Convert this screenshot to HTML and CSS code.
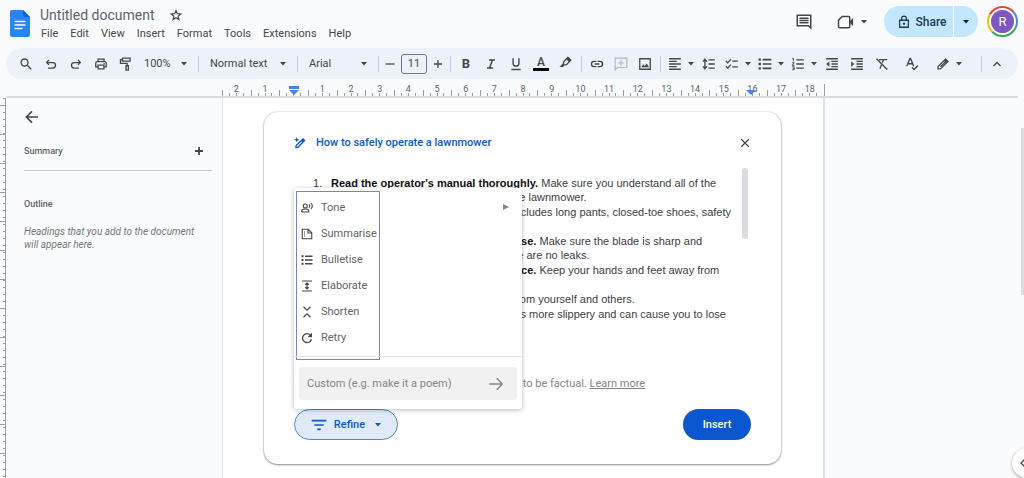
FILE: index.html
```html
<!DOCTYPE html>
<html lang="en-GB">
<head>
<meta charset="utf-8">
<title>Untitled document</title>
<link rel="stylesheet" href="styles.css">
</head>
<body>
<svg class="defs" aria-hidden="true">
  <symbol id="caret" viewBox="0 0 6 4"><path d="M0 0h6L3 3.5z" fill="currentColor"/></symbol>
  <symbol id="bullets" viewBox="0 0 24 24"><path fill="currentColor" d="M1 2.500h4v4H1zM1 10h4v4H1zM1 17.500h4v4H1zM8 3.200h15v2.600H8zM8 10.700h15v2.600H8zM8 18.200h15v2.600H8z"/></symbol>
</svg>

<header class="header">
  <svg class="logo" viewBox="0 0 20 27"><path fill="#2684fc" d="M2 0h11l7 7v18a2 2 0 0 1-2 2H2a2 2 0 0 1-2-2V2a2 2 0 0 1 2-2z"/><path fill="#0066da" d="M13 0l7 7h-5a2 2 0 0 1-2-2z"/><path stroke="#fff" stroke-width="1.400" d="M4.500 11.500h11M4.500 15h11M4.500 18.500h8"/></svg>
  <div class="headings">
    <div class="title-row">
      <h1 class="title">Untitled document</h1>
      <button class="bare" aria-label="Star"><svg class="i12" viewBox="0 0 24 24"><path fill="none" stroke="currentColor" stroke-width="2.400" d="M12 3l2.600 6.300 6.900.600-5.200 4.500 1.600 6.700-5.900-3.600-5.900 3.600 1.600-6.700-5.200-4.500 6.900-.6z"/></svg></button>
    </div>
    <nav class="menus">
      <button class="bare">File</button><button class="bare">Edit</button><button class="bare">View</button><button class="bare">Insert</button><button class="bare">Format</button><button class="bare">Tools</button><button class="bare">Extensions</button><button class="bare">Help</button>
    </nav>
  </div>
  <div class="actions">
    <button class="bare" aria-label="Comments"><svg class="i18" viewBox="0 0 24 24"><path fill="none" stroke="currentColor" stroke-width="2" d="M3 3h18v17l-3-3H3z"/><path stroke="currentColor" stroke-width="1.800" d="M6 7h12M6 10h12M6 13h12"/></svg></button>
    <button class="bare meet" aria-label="Join a call"><svg class="i18" viewBox="0 0 24 24"><path fill="none" stroke="currentColor" stroke-width="2" d="M7 4.500h8.500a1.500 1.500 0 0 1 1.500 1.500v12a1.500 1.500 0 0 1-1.500 1.500H3.500A1.500 1.500 0 0 1 2 18V9.500z"/><path fill="currentColor" d="M17 11L21.500 6.500v11L17 13z"/></svg><svg class="caret"><use href="#caret"/></svg></button>
    <div class="share">
      <button class="share-main"><svg class="i14" viewBox="0 0 24 24"><path fill="none" stroke="currentColor" stroke-width="2.200" d="M4.500 9h15v12h-15zM8 9V6a4 4 0 0 1 8 0v3"/><circle cx="12" cy="15" r="2" fill="currentColor"/></svg>Share</button>
      <button class="share-more" aria-label="Sharing options"><svg class="caret"><use href="#caret"/></svg></button>
    </div>
    <button class="avatar" aria-label="Account"><span class="initial">R</span></button>
  </div>
</header>

<div class="toolbar" role="toolbar">
  <div class="group">
    <button class="tool" aria-label="Search"><svg class="i14" viewBox="0 0 24 24"><path fill="none" stroke="currentColor" stroke-width="2.300" d="M14.500 14.500L21 21"/><circle cx="9.500" cy="9.500" r="6" fill="none" stroke="currentColor" stroke-width="2.300"/></svg></button>
    <button class="tool" aria-label="Undo"><svg class="i14" viewBox="0 0 24 24"><path fill="none" stroke="currentColor" stroke-width="2.200" d="M8.500 5L4.500 9.500l4 4M5 9.500h10a4.700 4.700 0 0 1 0 9.500H7"/></svg></button>
    <button class="tool" aria-label="Redo"><svg class="i14" viewBox="0 0 24 24"><path fill="none" stroke="currentColor" stroke-width="2.200" d="M15.500 5l4 4.500-4 4M19 9.500H9a4.700 4.700 0 0 0 0 9.500h8"/></svg></button>
    <button class="tool" aria-label="Print"><svg class="i14" viewBox="0 0 24 24"><path fill="none" stroke="currentColor" stroke-width="2.200" d="M7 8V3.500h10V8M7 17H3v-6.500A2.500 2.500 0 0 1 5.500 8h13a2.500 2.500 0 0 1 2.500 2.500V17h-4M7 14h10v6.500H7z"/><circle cx="17.500" cy="11.500" r="1.200" fill="currentColor"/></svg></button>
    <button class="tool" aria-label="Paint format"><svg class="i14" viewBox="0 0 24 24"><path fill="none" stroke="currentColor" stroke-width="2.200" d="M6 2h13v5H6zM6 4.500H2.500V11H14v4M12 15h4v7.500h-4z"/></svg></button>
  </div>
  <label class="pick zoom"><select aria-label="Zoom"><option>100%</option></select><svg class="caret"><use href="#caret"/></svg></label>
  <span class="sep"></span>
  <label class="pick style"><select aria-label="Styles"><option>Normal text</option></select><svg class="caret"><use href="#caret"/></svg></label>
  <span class="sep"></span>
  <label class="pick font"><select aria-label="Font"><option>Arial</option></select><svg class="caret"><use href="#caret"/></svg></label>
  <span class="sep"></span>
  <div class="size">
    <button class="bare" aria-label="Decrease font size"><svg class="i12" viewBox="0 0 24 24"><path stroke="currentColor" stroke-width="2.600" d="M3 12h18"/></svg></button>
    <input aria-label="Font size" value="11">
    <button class="bare" aria-label="Increase font size"><svg class="i12" viewBox="0 0 24 24"><path stroke="currentColor" stroke-width="2.600" d="M4 12h16M12 4v16"/></svg></button>
  </div>
  <span class="sep"></span>
  <div class="group">
    <button class="tool" aria-label="Bold"><b>B</b></button>
    <button class="tool" aria-label="Italic"><svg class="i12" viewBox="0 0 24 24"><path fill="none" stroke="currentColor" stroke-width="3" d="M8 4h12M4 20h12M15 4L9 20"/></svg></button>
    <button class="tool" aria-label="Underline"><svg class="i14" viewBox="0 0 24 24"><path fill="none" stroke="currentColor" stroke-width="2.400" d="M7 2v8.500a5 5 0 0 0 10 0V2M4 21.500h16"/></svg></button>
    <button class="tool" aria-label="Text colour"><span class="ink">A</span></button>
    <button class="tool" aria-label="Highlight colour"><svg class="i14 raised" viewBox="0 0 24 24"><path fill="none" stroke="currentColor" stroke-width="2.200" d="M8 11.500l7-7.500 5 5-7 7.500-4 .5-2.500 2.500H3.500l4-4z"/><path fill="currentColor" d="M12 7l4-4 5 5-4 4z"/></svg></button>
  </div>
  <span class="sep"></span>
  <div class="group tight">
    <button class="tool" aria-label="Insert link"><svg class="i14" viewBox="0 0 24 24"><path fill="none" stroke="currentColor" stroke-width="2.400" d="M11 7.500H7a4.500 4.500 0 0 0 0 9h4M13 7.500h4a4.500 4.500 0 0 1 0 9h-4M8 12h8"/></svg></button>
    <button class="tool" aria-label="Add comment" disabled><svg class="i14" viewBox="0 0 24 24"><path fill="none" stroke="currentColor" stroke-width="2" d="M2 2h20v16H6l-4 4zM12 5.500v9M7.500 10h9"/></svg></button>
    <button class="tool" aria-label="Insert image"><svg class="i14" viewBox="0 0 24 24"><path fill="none" stroke="currentColor" stroke-width="2.200" d="M3 3h18v18H3z"/><path fill="currentColor" d="M5.500 17.500l3.500-5 2.500 3 3.500-4.500 4 6.500z"/></svg></button>
  </div>
  <span class="sep"></span>
  <button class="tool pair" aria-label="Align"><svg class="i14" viewBox="0 0 24 24"><path stroke="currentColor" stroke-width="2.200" d="M2 3h20M2 7.500h13M2 12h20M2 16.500h13M2 21h20"/></svg><svg class="caret"><use href="#caret"/></svg></button>
  <button class="tool" aria-label="Line spacing"><svg class="i14" viewBox="0 0 24 24"><path fill="none" stroke="currentColor" stroke-width="2.300" d="M11 5h11M11 12h11M11 19h11M5 4v16M1.500 8L5 4l3.500 4M1.500 16L5 20l3.500-4"/></svg></button>
  <button class="tool pair" aria-label="Checklist"><svg class="i14" viewBox="0 0 24 24"><path fill="none" stroke="currentColor" stroke-width="2.300" d="M1.500 7l3 3L10 4M1.500 16l3 3L10 13M12.500 7H22M12.500 17H22"/></svg><svg class="caret"><use href="#caret"/></svg></button>
  <button class="tool pair" aria-label="Bulleted list"><svg class="i14" viewBox="0 0 24 24"><use href="#bullets"/></svg><svg class="caret"><use href="#caret"/></svg></button>
  <button class="tool pair" aria-label="Numbered list"><svg class="i14" viewBox="0 0 24 24"><path fill="none" stroke="currentColor" stroke-width="2.200" d="M9 5h13M9 12h13M9 19h13"/><path fill="none" stroke="currentColor" stroke-width="1.600" d="M2 2.500h2v5M2 9.800h3.500l-3.500 4.500h4M2 16.800h3.500v5H2M3 19.300h2.500"/></svg><svg class="caret"><use href="#caret"/></svg></button>
  <div class="group">
    <button class="tool" aria-label="Decrease indent"><svg class="i14" viewBox="0 0 24 24"><path fill="none" stroke="currentColor" stroke-width="2.200" d="M2 3h20M11 7.500h11M11 12h11M11 16.500h11M2 21h20"/><path fill="currentColor" d="M7.500 7.500v9L2 12z"/></svg></button>
    <button class="tool" aria-label="Increase indent"><svg class="i14" viewBox="0 0 24 24"><path fill="none" stroke="currentColor" stroke-width="2.200" d="M2 3h20M11 7.500h11M11 12h11M11 16.500h11M2 21h20"/><path fill="currentColor" d="M2 7.500v9L7.500 12z"/></svg></button>
    <button class="tool" aria-label="Clear formatting"><svg class="i14" viewBox="0 0 24 24"><path fill="none" stroke="currentColor" stroke-width="2.300" d="M2.500 3L21 21.500M7 4.500h14M14.500 5l-2 5M11 13.500L8.500 20"/></svg></button>
  </div>
  <button class="tool spell" aria-label="Spelling and grammar check"><svg class="i14" viewBox="0 0 24 24"><path fill="none" stroke="currentColor" stroke-width="2.300" d="M3 16L8.500 2.500h1L15 16M5 11.500h8M12 18l3.500 3.500L22 14.500"/></svg></button>
  <button class="tool pair mode" aria-label="Editing mode"><svg class="i14" viewBox="0 0 24 24"><path fill="none" stroke="currentColor" stroke-width="2.200" d="M3.500 20.500v-4L16.500 3.500l4 4L7.500 20.500z"/><path fill="currentColor" d="M7 16l9-9 1.500 1.500-9 9zM13.500 6.500l3-3 4 4-3 3z"/></svg><svg class="caret"><use href="#caret"/></svg></button>
  <span class="sep last"></span>
  <button class="tool" aria-label="Hide the menus"><svg class="i12" viewBox="0 0 24 24"><path fill="none" stroke="currentColor" stroke-width="2.600" d="M5 16l7-7 7 7"/></svg></button>
</div>

<div class="ruler">
  <div class="scale">
    <span>2</span><span>1</span><span></span><span>1</span><span>2</span><span>3</span><span>4</span><span>5</span><span>6</span><span>7</span><span>8</span><span>9</span><span>10</span><span>11</span><span>12</span><span>13</span><span>14</span><span>15</span><span>16</span><span>17</span><span>18</span>
    <svg class="marker start" viewBox="0 0 10 9"><path fill="#4285f4" d="M0 0h10v3H0zM0 4h10L5 9z"/></svg>
    <svg class="marker end" viewBox="0 0 10 9"><path fill="#4285f4" d="M0 4h10L5 9z"/></svg>
  </div>
</div>

<main class="workspace">
  <div class="v-ruler"></div>
  <aside class="outline">
    <button class="bare back" aria-label="Close outline"><svg class="i18" viewBox="0 0 24 24"><path fill="none" stroke="currentColor" stroke-width="2.200" d="M20 12H5M12 4.500L4.500 12l7.500 7.500"/></svg></button>
    <div class="summary"><h2>Summary</h2><button class="bare" aria-label="Add summary"><svg class="i12" viewBox="0 0 24 24"><path stroke="currentColor" stroke-width="3.600" d="M4 12h16M12 4v16"/></svg></button></div>
    <h2>Outline</h2>
    <p>Headings that you add to the document will appear here.</p>
  </aside>
  <div class="page">
    <section class="card">
      <div class="card-head">
        <svg class="i12 wand" viewBox="0 0 24 24"><path fill="none" stroke="currentColor" stroke-width="2.600" d="M4 21v-3.500L18 4l3 3L7.500 21z"/><path fill="currentColor" d="M5.500 0l1.500 4 4 1.500-4 1.500-1.500 4L4 7 0 5.500 4 4zM14 8l4-5 4 4-5 4z"/></svg>
        <h3>How to safely operate a lawnmower</h3>
        <button class="bare close" aria-label="Close"><svg class="i12" viewBox="0 0 24 24"><path stroke="currentColor" stroke-width="2.400" d="M4.500 4.500l15 15M19.500 4.500l-15 15"/></svg></button>
      </div>
      <div class="answer">
        <ol>
          <li><b>Read the operator's manual thoroughly.</b> Make sure you understand all of the<br>controls and basic safety features of the lawnmower.</li>
          <li><b>Wear all appropriate clothing.</b> This includes long pants, closed-toe shoes, safety<br>glasses and gloves.</li>
          <li><b>Check the lawnmower before each use.</b> Make sure the blade is sharp and<br>balanced properly, and check that there are no leaks.</li>
          <li><b>Start the lawnmower at a safe distance.</b> Keep your hands and feet away from<br>the blade.</li>
          <li><b>Point the discharge chute</b> far away from yourself and others.</li>
          <li><b>Avoid mowing wet grass.</b> Wet grass is more slippery and can cause you to lose</li>
        </ol>
        <span class="thumb"></span>
      </div>
      <p class="note">This is a creative writing aid, and isn't intended to be factual. <a href="#">Learn more</a></p>
      <div class="card-foot">
        <div class="refine-wrap">
          <button class="refine"><svg class="i16" viewBox="0 0 24 24"><path stroke="currentColor" stroke-width="2.400" d="M1 5.500h22M5 12h14M9.500 18.500h5"/></svg>Refine<svg class="caret"><use href="#caret"/></svg></button>
          <div class="menu">
            <div class="options">
              <button class="option"><svg class="i12" viewBox="0 0 24 24"><circle cx="8.500" cy="8" r="4" fill="none" stroke="currentColor" stroke-width="2.200"/><path fill="none" stroke="currentColor" stroke-width="2.200" d="M1.500 20v-2.500c0-2 4-3.500 7-3.500s7 1.500 7 3.500V20zM16 4.500c1.500 2 1.500 5 0 7M20 2c3 3.500 3 8.500 0 12"/></svg>Tone</button>
              <button class="option"><svg class="i12" viewBox="0 0 24 24"><path fill="none" stroke="currentColor" stroke-width="2.200" d="M2.500 2.500h12l7 7v12h-19zM14 3v7h7"/><path stroke="currentColor" stroke-width="2" d="M6 8h2M6 12h2M6 16h2"/></svg>Summarise</button>
              <button class="option"><svg class="i12" viewBox="0 0 24 24"><use href="#bullets"/></svg>Bulletise</button>
              <button class="option"><svg class="i12" viewBox="0 0 24 24"><path fill="none" stroke="currentColor" stroke-width="2.400" d="M2 2h20M2 22h20M12 6v12M8.500 9.500L12 6l3.500 3.500M8.500 14.500L12 18l3.500-3.500"/></svg>Elaborate</button>
              <button class="option"><svg class="i12" viewBox="0 0 24 24"><path fill="none" stroke="currentColor" stroke-width="2.400" d="M5 1.500l7 7 7-7M5 22.500l7-7 7 7"/></svg>Shorten</button>
              <button class="option"><svg class="i12" viewBox="0 0 24 24"><path fill="none" stroke="currentColor" stroke-width="2.600" d="M19 6.500a9 9 0 1 0 1.800 8"/><path fill="currentColor" d="M22 1.500v9h-9z"/></svg>Retry</button>
            </div>
            <svg class="more" viewBox="0 0 6 6"><path fill="#80868b" d="M0 0l6 3-6 3z"/></svg>
            <div class="custom">
              <div class="field"><input aria-label="Custom prompt" placeholder="Custom (e.g. make it a poem)"><button class="bare" aria-label="Submit"><svg class="i16" viewBox="0 0 24 24"><path fill="none" stroke="currentColor" stroke-width="2" d="M2 12h19M13 3.500l8.500 8.500-8.500 8.500"/></svg></button></div>
            </div>
          </div>
        </div>
        <button class="insert">Insert</button>
      </div>
    </section>
  </div>
  <div class="gutter">
    <span class="scroll"></span>
    <button class="side" aria-label="Show side panel"><svg class="i12" viewBox="0 0 24 24"><path fill="none" stroke="currentColor" stroke-width="2.600" d="M15 5l-7 7 7 7"/></svg></button>
  </div>
</main>
</body>
</html>
```

FILE: styles.css
```css
* { box-sizing: border-box; }
html, body { height: 100%; }
body {
  margin: 0;
  display: flex;
  flex-direction: column;
  overflow: hidden;
  background: #f9fbfd;
  color: #444746;
  font: 11px/14px Roboto, "Liberation Sans", sans-serif;
}
h1, h2, h3, p, ol { margin: 0; font-size: inherit; font-weight: inherit; }
button, input, select { font: inherit; color: inherit; }
button { display: flex; align-items: center; justify-content: center; padding: 0; border: 0; background: none; cursor: pointer; }
svg { flex: none; display: block; }
.defs { position: absolute; width: 0; height: 0; }
.i12 { width: 12px; height: 12px; }
.i14 { width: 14px; height: 14px; }
.i16 { width: 16px; height: 16px; }
.i18 { width: 18px; height: 18px; }
.caret { width: 6px; height: 4px; }

.header { display: flex; align-items: flex-start; height: 48px; padding: 6px 6px 0 10px; }
.logo { width: 20px; height: 27px; margin-top: 4px; }
.headings { flex: 1; padding-left: 10px; }
.title-row { display: flex; align-items: center; gap: 15px; height: 18px; }
.title { font-size: 14px; line-height: 18px; color: #5f6368; }
.menus { display: flex; gap: 12px; padding: 3px 0 0 1px; }
.actions { display: flex; align-items: center; }
.meet { margin-left: 24px; gap: 6px; }
.share { display: flex; height: 31px; margin-left: 17px; border-radius: 16px; overflow: hidden; background: #c2e7ff; color: #001d35; }
.share-main { width: 69px; gap: 5px; padding-left: 6px; font-size: 12px; color: #1f3a52; font-weight: 500; }
.share-more { width: 25px; border-left: 1px solid #f9fbfd; }
.avatar { width: 31px; height: 31px; margin-left: 9px; padding: 2px; border-radius: 50%; background: conic-gradient(from 315deg, #ea4335 0 25%, #4285f4 25% 46%, #34a853 46% 75%, #fbbc04 75% 96%, #ea4335 96%); }
.initial { flex: 1; height: 27px; border: 2px solid #fff; border-radius: 50%; background: #7e57c2; color: #fff; font-size: 13px; line-height: 23px; }

.toolbar { display: flex; align-items: center; height: 31px; margin: 0 6px; padding: 0 9px 0 8px; border-radius: 16px; background: #edf2fa; }
.group { display: flex; gap: 1px; }
.tight { gap: 0; }
.tool { width: 24px; height: 24px; }
.tool:disabled { color: #b4b8bd; }
.tool b { font-size: 13px; }
.pair { width: 33px; gap: 6px; }
.ink { width: 16px; border-bottom: 3px solid #000; font-size: 12px; line-height: 12px; font-weight: 500; }
.raised { margin-bottom: 4px; }
.sep { width: 1px; height: 16px; margin: 0 3px; background: #c7cbd1; }
.last { margin-left: auto; }
.pick { display: grid; align-items: center; }
.pick > * { grid-area: 1 / 1; }
.pick .caret { justify-self: end; margin-right: 8px; pointer-events: none; }
.pick select { width: 100%; padding: 0 0 0 8px; border: 0; background: none; appearance: none; }
.pick.zoom select { padding-left: 6px; }
.zoom { width: 57px; }
.style { width: 92px; }
.font { width: 74px; }
.size { display: flex; align-items: center; gap: 5px; margin: 0 3px 0 2px; }
.size input { width: 26px; height: 20px; padding: 0; border: 1px solid #747775; border-radius: 3px; background: none; text-align: center; }
.spell { margin-left: 6px; }
.mode { margin-left: 8px; }

.ruler { margin: 5px 6px 0; height: 14px; border-bottom: 2px solid #dadce0; padding-left: 216px; }
.scale {
  position: relative;
  display: flex;
  width: 603px;
  height: 12px;
  border-right: 1px solid #9aa0a6;
}
.scale span {
  flex: 1 1 0;
  text-align: center;
  font-size: 9px;
  line-height: 10px;
  color: #5f6368;
  background:
    linear-gradient(#9aa0a6, #9aa0a6) 0 100% / 1px 6px no-repeat,
    linear-gradient(#9aa0a6, #9aa0a6) 25% 100% / 1px 3px no-repeat,
    linear-gradient(#9aa0a6, #9aa0a6) 50% 100% / 1px 3px no-repeat,
    linear-gradient(#9aa0a6, #9aa0a6) 75% 100% / 1px 3px no-repeat;
}
.marker { position: absolute; top: 2px; width: 10px; height: 9px; }
.start { left: 67px; }
.end { left: 524px; }

.workspace { flex: 1; min-height: 0; display: flex; align-items: stretch; }
.v-ruler {
  width: 6px;
  border-right: 1px solid #9aa0a6;
  background:
    repeating-linear-gradient(#9aa0a6 0 1px, transparent 1px 29px) 0 7px / 6px 100% no-repeat,
    repeating-linear-gradient(#9aa0a6 0 1px, transparent 1px 7px) 3px 0 / 3px 100% no-repeat;
}
.outline { width: 216px; padding: 10px 10px 0 18px; }
.back { margin-left: -1px; }
.outline h2 { font-size: 9px; font-weight: 500; color: #5f6368; }
.summary { display: flex; align-items: center; justify-content: space-between; padding: 18px 7px 12px 0; margin-bottom: 26px; border-bottom: 1px solid #c7cbd1; }
.outline p { padding: 14px 7px 0 0; font-size: 10px; line-height: 13px; font-style: italic; color: #747775; }
.page { width: 603px; padding: 14px 42px 14px 41px; background: #fff; border: solid #dfe1e5; border-width: 0 2px 0 1px; }
.card { padding: 23px 30px 24px; border-radius: 14px; background: #fff; box-shadow: 0 1px 2px #0006, 0 0 2px #0004; }
.card-head { display: flex; align-items: center; height: 16px; color: #0b57d0; }
.card-head h3 { flex: 1; padding-left: 10px; font-size: 11px; font-weight: 500; }
.close { color: #444746; }
.answer { display: flex; justify-content: space-between; height: 186px; padding-top: 17px; overflow: hidden; }
.answer ol {
  display: flex;
  flex-direction: column;
  gap: 1px;
  padding: 8px 0 0 37px;
  font: 11px/14px "Liberation Sans", Arial, sans-serif;
  color: #3c4043;
  white-space: nowrap;
  list-style: none;
  counter-reset: step;
}
.answer li { counter-increment: step; }
.answer li::before { content: counter(step) "."; display: inline-block; width: 18px; margin-left: -18px; }
.answer b { color: #111; }
.thumb { width: 6px; height: 71px; margin-right: 3px; border-radius: 3px; background: #dadce0; }
.note { margin-top: 40px; color: #80868b; white-space: nowrap; }
.note a { color: inherit; }
.card-foot { display: flex; justify-content: space-between; padding-top: 18px; }
.refine-wrap { position: relative; }
.refine { width: 104px; height: 31px; gap: 7px; border: 1px solid #4a86e8; border-radius: 16px; background: #e1eaf9; color: #0b57d0; font-weight: 500; }
.refine .caret { margin-left: 3px; }
.insert { width: 68px; height: 31px; border-radius: 16px; background: #0b57d0; color: #fff; font-weight: 500; }
.menu { position: absolute; left: 0; bottom: 100%; width: 228px; border-radius: 3px; background: #fff; box-shadow: 0 1px 5px #0004; padding: 3px 0 0; }
.options { width: 84px; margin-left: 2px; padding: 3px 0 8px; border: 1px solid #7b7fdc; }
.option { justify-content: flex-start; width: 100%; height: 26px; gap: 8px; padding-left: 4px; color: #5f6368; }
.option svg { color: #444746; }
.more { position: absolute; top: 16px; right: 13px; width: 6px; height: 6px; }
.custom { margin-top: -4px; padding: 10px 5px 9px; border-top: 1px solid #e3e5e8; }
.field { display: flex; align-items: center; height: 33px; padding: 0 13px 0 8px; border-radius: 3px; background: #f1f1f1; color: #80868b; }
.field input { flex: 1; min-width: 0; padding: 0; border: 0; background: none; outline: 0; }
.field input::placeholder { color: #80868b; opacity: 1; }
.gutter { flex: 1; position: relative; overflow: hidden; }
.scroll { position: absolute; top: 30px; right: 0; width: 3px; height: 167px; background: #dadce0; }
.side { position: absolute; right: -18px; bottom: 0; width: 30px; height: 30px; border-radius: 50%; background: #fff; box-shadow: 0 1px 3px #0006; justify-content: flex-start; padding-left: 5px; }
```
